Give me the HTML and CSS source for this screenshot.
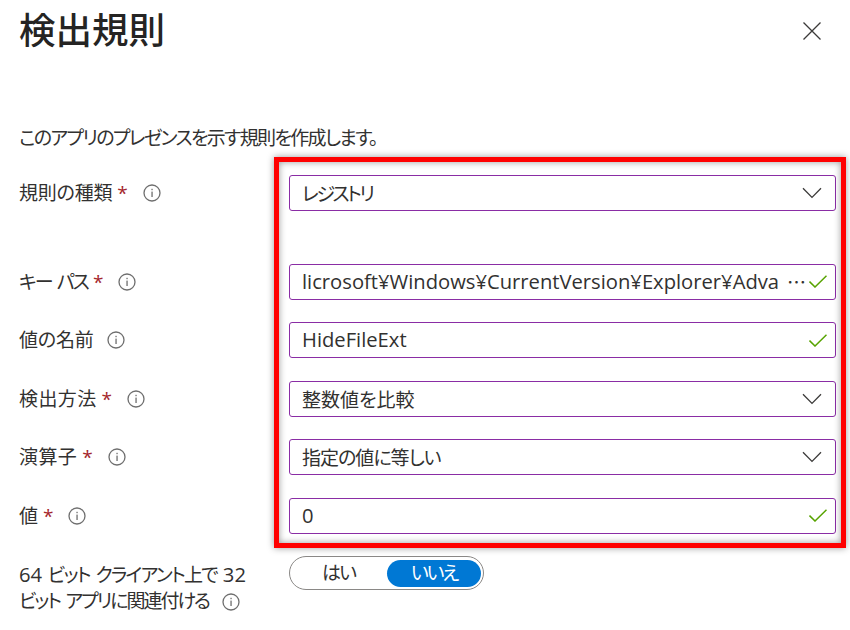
FILE: index.html
```html
<!DOCTYPE html>
<html lang="ja">
<head>
<meta charset="utf-8">
<title>検出規則</title>
<link rel="stylesheet" href="styles.css">
</head>
<body>
<svg class="defs" width="0" height="0" aria-hidden="true">
  <defs>
    <symbol id="info" viewBox="0 0 18 18">
      <circle cx="9" cy="9" r="8" fill="none" stroke="#6e6e6e" stroke-width="1.3"/>
      <rect x="8.4" y="7.6" width="1.3" height="5.4" fill="#6e6e6e"/>
      <rect x="8.4" y="4.8" width="1.3" height="1.4" fill="#6e6e6e"/>
    </symbol>
    <symbol id="chevron" viewBox="0 0 20 12">
      <path d="M1 1.2 L10 10.4 L19 1.2" fill="none" stroke="#3b3a39" stroke-width="1.3"/>
    </symbol>
    <symbol id="check" viewBox="0 0 18 13">
      <path d="M0.5 6.6 L6 12 L17.5 0.7" fill="none" stroke="#57a300" stroke-width="1.5"/>
    </symbol>
  </defs>
</svg>
<main class="panel">
  <header class="head">
    <h1 class="title">検出規則</h1>
    <button class="close" aria-label="閉じる">
      <svg width="18" height="18" viewBox="0 0 18 18"><path d="M0.5 0.5 L17.5 17.5 M17.5 0.5 L0.5 17.5" fill="none" stroke="#3b3a39" stroke-width="1.3"/></svg>
    </button>
  </header>
  <p class="desc">このアプリのプレゼンスを示す規則を作成します。</p>
  <form class="form">
    <div class="row row-first">
      <div class="label"><span class="snug">規則の種類</span><span class="req">*</span><svg class="info"><use href="#info"/></svg></div>
      <div class="field"><span class="value kana">レジストリ</span><svg class="chev"><use href="#chevron"/></svg></div>
    </div>
    <div class="row">
      <div class="label"><span class="kana-label">キー パス</span><span class="req">*</span><svg class="info"><use href="#info"/></svg></div>
      <div class="field"><span class="value clip lat">licrosoft¥Windows¥CurrentVersion¥Explorer¥Adva</span><span class="more">⋯</span><svg class="chk"><use href="#check"/></svg></div>
    </div>
    <div class="row">
      <div class="label"><span class="snug">値の名前</span><svg class="info info-plain"><use href="#info"/></svg></div>
      <div class="field"><span class="value lat">HideFileExt</span><svg class="chk"><use href="#check"/></svg></div>
    </div>
    <div class="row">
      <div class="label"><span class="wide">検出方法</span><span class="req">*</span><svg class="info"><use href="#info"/></svg></div>
      <div class="field"><span class="value">整数値を比較</span><svg class="chev"><use href="#chevron"/></svg></div>
    </div>
    <div class="row">
      <div class="label"><span class="wide">演算子</span><span class="req">*</span><svg class="info"><use href="#info"/></svg></div>
      <div class="field"><span class="value mixed">指定の値に等しい</span><svg class="chev"><use href="#chevron"/></svg></div>
    </div>
    <div class="row">
      <div class="label">値<span class="req">*</span><svg class="info"><use href="#info"/></svg></div>
      <div class="field"><span class="value lat">0</span><svg class="chk"><use href="#check"/></svg></div>
    </div>
    <div class="row row-last">
      <div class="label label-multi"><span class="line-one"><span class="lat">64</span> ビット クライアント上で <span class="lat">32</span></span><br><span class="line-two">ビット アプリに関連付ける</span><svg class="info info-plain"><use href="#info"/></svg></div>
      <div class="toggle"><span class="opt opt-off">はい</span><span class="opt opt-on">いいえ</span></div>
    </div>
  </form>
  <div class="highlight"></div>
</main>
</body>
</html>
```
FILE: styles.css
```css
* { box-sizing: border-box; }
html, body { margin: 0; padding: 0; background: #fff; }
body {
  width: 850px;
  height: 630px;
  overflow: hidden;
  font-family: "Open Sans", "Noto Sans CJK JP", sans-serif;
  font-size: 19px;
  color: #323130;
  font-feature-settings: "palt";
}
.defs { position: absolute; }
.panel { position: relative; width: 850px; height: 630px; overflow: hidden; }
.head {
  display: flex;
  justify-content: space-between;
  align-items: flex-start;
  height: 124px;
  padding: 0 20px 0 19px;
}
.title {
  margin: 4px 0 0;
  font-size: 36.5px;
  line-height: 52px;
  font-weight: 500;
  color: #252423;
}
.close {
  display: block;
  margin: 22px 9px 0 0;
  padding: 0;
  width: 18px;
  height: 18px;
  border: 0;
  background: none;
}
.close svg { display: block; }
.desc {
  margin: 0 0 0 19px;
  height: 51px;
  padding-top: 1px;
  font-size: 19px;
  line-height: 26px;
  letter-spacing: -1.65px;
}
.form {
  display: flex;
  flex-direction: column;
  gap: 22.4px;
}
.row {
  display: grid;
  grid-template-columns: 289px 547px;
  height: 36px;
  align-items: center;
}
.row-first { margin-bottom: 30.6px; }
.row-last { height: 34px; align-items: start; }
.label {
  display: flex;
  align-items: center;
  padding-left: 19px;
  line-height: 26px;
}
.label-multi { display: block; line-height: 26px; margin-top: 5px; white-space: nowrap; }
.snug { letter-spacing: -0.2px; }
.wide { letter-spacing: 0.4px; }
.kana-label { letter-spacing: -1.9px; word-spacing: 2px; white-space: pre; }
.line-one { letter-spacing: -1.7px; word-spacing: 2.5px; }
.line-two { letter-spacing: -2px; word-spacing: 2.5px; }
.lat { font-size: 20.2px; letter-spacing: 0; }
.field .lat { padding-bottom: 2px; }
.req { color: #a4262c; margin-left: 5px; font-weight: 400; letter-spacing: 0; }
.info { width: 18px; height: 18px; margin-left: 15px; }
.info-plain { margin-left: 13px; vertical-align: -3px; }
.field {
  display: flex;
  align-items: center;
  height: 36px;
  padding: 0 13px 0 12px;
  border: 1px solid #8a2da5;
  border-radius: 3px;
  background: #fff;
}
.value { flex: 1; white-space: nowrap; overflow: hidden; }
.kana { letter-spacing: -2.4px; }
.mixed { letter-spacing: -1px; }
.clip { flex: 0 0 477px; }
.more { flex: 1; text-align: right; color: #323130; padding-right: 1px; }
.chev { width: 20px; height: 12px; }
.chk { width: 18px; height: 13px; margin-left: 2px; margin-right: -5px; }
.toggle {
  display: grid;
  grid-template-columns: 97px 94px;
  align-items: center;
  width: 195px;
  height: 34px;
  border: 1px solid #8a8886;
  border-radius: 17px;
  padding: 3px 2px 3px 0;
  line-height: 26px;
}
.opt { text-align: center; height: 27px; line-height: 27px; }
.opt-off { letter-spacing: -2px; }
.opt-on { background: #0078d4; color: #fff; border-radius: 14px; letter-spacing: -2.3px; }
.highlight {
  position: absolute;
  left: 274px;
  top: 157px;
  width: 572px;
  height: 391px;
  border: 5px solid #f00;
  box-shadow: 0 0 7px rgba(0,0,0,.4), inset 0 0 7px rgba(0,0,0,.4);
  pointer-events: none;
}
```
